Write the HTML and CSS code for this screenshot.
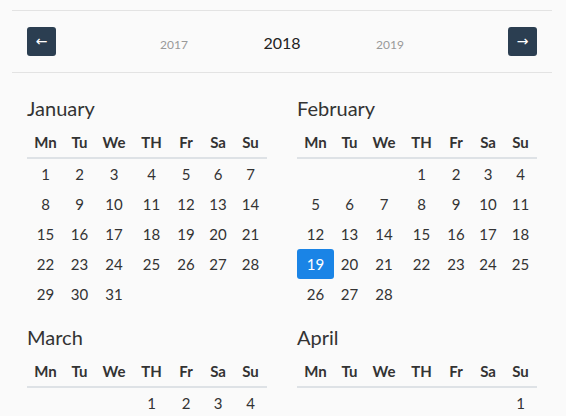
FILE: index.html
```html
<!DOCTYPE html>
<html lang="en">

<head>
    <meta charset="UTF-8">
    <meta name="viewport" content="width=device-width, initial-scale=1.0">
    <title>Year Calendar</title>
    <link rel="stylesheet" href="styles.css">
</head>

<body>
    <div class="wrap">
        <div class="year-nav">
            <button class="nav-btn">&larr;</button>
            <div class="years">
                <span class="year other">2017</span>
                <span class="year current">2018</span>
                <span class="year other">2019</span>
            </div>
            <button class="nav-btn">&rarr;</button>
        </div>
        <div class="months" id="months"></div>
    </div>

    <script>
        var names = ["January", "February", "March", "April"];
        var days = ["Mn", "Tu", "We", "TH", "Fr", "Sa", "Su"];
        var html = "";

        names.forEach(function (name, m) {
            var first = (new Date(2018, m, 1).getDay() + 6) % 7;
            var count = new Date(2018, m + 1, 0).getDate();
            var temp = "<div class='month'><h5>" + name + "</h5><table><thead><tr>";
            days.forEach(function (d) {
                temp += "<th>" + d + "</th>";
            });
            temp += "</tr></thead><tbody><tr>";
            for (var i = 0; i < first; i++) {
                temp += "<td></td>";
            }
            for (var day = 1; day <= count; day++) {
                var cls = (m == 1 && day == 19) ? " class='today'" : "";
                temp += "<td" + cls + ">" + day + "</td>";
                if ((first + day) % 7 == 0 && day < count) {
                    temp += "</tr><tr>";
                }
            }
            temp += "</tr></tbody></table></div>";
            html += temp;
        });

        document.getElementById("months").innerHTML = html;
    </script>
</body>

</html>
```

FILE: styles.css
```css
html,
body {
    overflow: hidden;
}

body {
    margin: 0;
    background-color: #fafafa;
    font-family: "Lato", "Open Sans", sans-serif;
    font-size: 15px;
    color: #333;
}

.wrap {
    width: 540px;
    margin: 0 12px;
}

.year-nav {
    margin-top: 10px;
    height: 61px;
    padding: 0 15px;
    border-top: 1px solid #e3e3e3;
    border-bottom: 1px solid #e3e3e3;
    display: flex;
    align-items: center;
    justify-content: space-between;
}

.nav-btn {
    width: 29px;
    height: 29px;
    padding: 0;
    border: none;
    border-radius: 3px;
    background-color: #2b3e51;
    color: #fff;
    font-family: "DejaVu Sans", sans-serif;
    font-size: 14px;
    line-height: 29px;
}

.years {
    width: 324px;
    display: grid;
    grid-template-columns: 1fr 1fr 1fr;
    align-items: baseline;
    text-align: center;
    margin-top: 2px;
}

.year.other {
    font-size: 12px;
    color: #999;
}

.year.current {
    font-size: 16px;
    color: #222;
}

.months {
    display: grid;
    grid-template-columns: 1fr 1fr;
    column-gap: 30px;
    padding: 23px 15px 0;
}

.month {
    margin-bottom: 16px;
}

.month h5 {
    margin: 0 0 7px;
    font-size: 20px;
    line-height: 24px;
    font-weight: normal;
}

table {
    width: 100%;
    table-layout: fixed;
    border-collapse: separate;
    border-spacing: 0;
}

th,
td {
    padding: 4px 0;
    line-height: 22px;
    text-align: center;
}

th {
    font-weight: bold;
    border-bottom: 2px solid #dee2e6;
}

th:nth-child(1) { width: 37px; }
th:nth-child(2) { width: 31px; }
th:nth-child(3) { width: 38px; }
th:nth-child(4) { width: 37px; }
th:nth-child(5) { width: 32px; }
th:nth-child(6) { width: 32px; }

td.today {
    background-color: #1a84e6;
    color: #fff;
    border-radius: 3px;
}
```
